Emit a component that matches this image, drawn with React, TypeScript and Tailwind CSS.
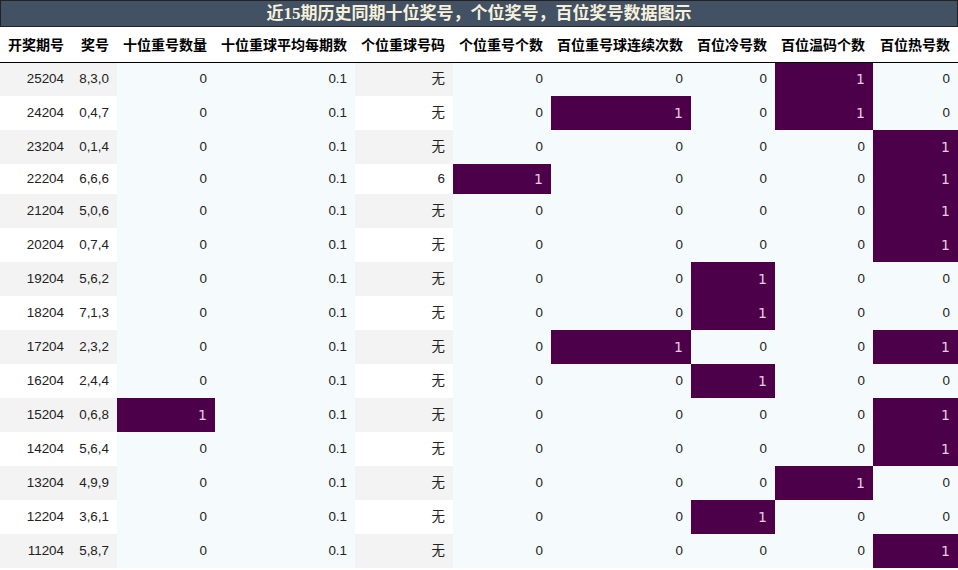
const HEADERS = [
    "开奖期号",
    "奖号",
    "十位重号数量",
    "十位重球平均每期数",
    "个位重球号码",
    "个位重号个数",
    "百位重号球连续次数",
    "百位冷号数",
    "百位温码个数",
    "百位热号数",
];

const WIDTHS = [
    "w-[72px]",
    "w-[45px]",
    "w-[98px]",
    "w-[140px]",
    "w-[98px]",
    "w-[98px]",
    "w-[140px]",
    "w-[84px]",
    "w-[98px]",
    "w-[85px]",
];

// [期号, 奖号, 十位重号数量, 平均, 个位重球号码, 个位重号个数, 连续次数, 冷, 温, 热]
const ROWS: (string | number)[][] = [
    ["25204", "8,3,0", 0, "0.1", "无", 0, 0, 0, 1, 0],
    ["24204", "0,4,7", 0, "0.1", "无", 0, 1, 0, 1, 0],
    ["23204", "0,1,4", 0, "0.1", "无", 0, 0, 0, 0, 1],
    ["22204", "6,6,6", 0, "0.1", "6", 1, 0, 0, 0, 1],
    ["21204", "5,0,6", 0, "0.1", "无", 0, 0, 0, 0, 1],
    ["20204", "0,7,4", 0, "0.1", "无", 0, 0, 0, 0, 1],
    ["19204", "5,6,2", 0, "0.1", "无", 0, 0, 1, 0, 0],
    ["18204", "7,1,3", 0, "0.1", "无", 0, 0, 1, 0, 0],
    ["17204", "2,3,2", 0, "0.1", "无", 0, 1, 0, 0, 1],
    ["16204", "2,4,4", 0, "0.1", "无", 0, 0, 1, 0, 0],
    ["15204", "0,6,8", 1, "0.1", "无", 0, 0, 0, 0, 1],
    ["14204", "5,6,4", 0, "0.1", "无", 0, 0, 0, 0, 1],
    ["13204", "4,9,9", 0, "0.1", "无", 0, 0, 0, 1, 0],
    ["12204", "3,6,1", 0, "0.1", "无", 0, 0, 1, 0, 0],
    ["11204", "5,8,7", 0, "0.1", "无", 0, 0, 0, 0, 1],
];

// columns that alternate grey / white; the rest are a pale cyan
const STRIPED = [0, 1, 4];
const HEAT = [2, 5, 6, 7, 8, 9];

function Cell({ value, col, row }: { value: string | number; col: number; row: number }) {
    const hot = HEAT.includes(col) && value === 1;
    if (hot) {
        return (
            <td className="bg-[#4d0049] pr-2 text-right text-[14px] text-[#e7cde2] font-['DejaVu_Sans',sans-serif]">
                {value}
            </td>
        );
    }
    const bg = STRIPED.includes(col)
        ? row % 2 === 0
            ? "bg-[#f3f3f3]"
            : "bg-white"
        : "bg-[#f5fbfc]";
    return <td className={`${bg} pr-2 text-right text-[13.4px] text-[#222]`}>{value}</td>;
}

export default function App() {
    return (
        <div className="w-[958px] h-[570px] bg-white overflow-hidden font-['Liberation_Sans','Noto_Sans_CJK_SC',sans-serif]">
            {/* Title */}
            <div className="h-[27px] border border-[#222] bg-[#435164] flex items-center justify-center">
                <span className="text-[17px] font-bold text-[#f7f1dc] font-['Liberation_Serif','Noto_Sans_CJK_SC',serif]">
                    近15期历史同期十位奖号，个位奖号，百位奖号数据图示
                </span>
            </div>

            <table className="table-fixed border-collapse w-[958px]">
                <colgroup>
                    {WIDTHS.map((w, i) => (
                        <col key={i} className={w} />
                    ))}
                </colgroup>
                <thead>
                    <tr className="h-[35px] border-b border-black">
                        {HEADERS.map((h) => (
                            <th
                                key={h}
                                className="pr-2 text-right text-[14px] font-bold text-black whitespace-nowrap font-['Noto_Sans_CJK_SC',sans-serif]"
                            >
                                {h}
                            </th>
                        ))}
                    </tr>
                </thead>
                <tbody>
                    {ROWS.map((r, ri) => (
                        <tr key={ri} className={r[4] === "无" ? "h-[34px]" : "h-[30px]"}>
                            {r.map((v, ci) => (
                                <Cell key={ci} value={v} col={ci} row={ri} />
                            ))}
                        </tr>
                    ))}
                </tbody>
            </table>
        </div>
    );
}
